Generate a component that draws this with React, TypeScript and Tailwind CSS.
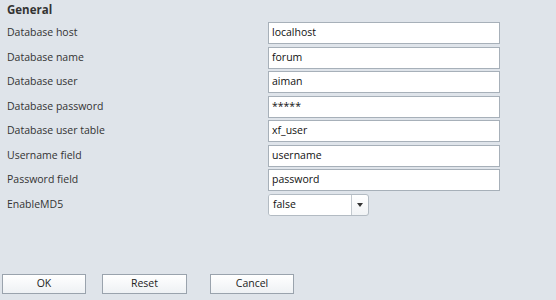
import React from "react";

const fields: { label: string; value: string }[] = [
    { label: "Database host", value: "localhost" },
    { label: "Database name", value: "forum" },
    { label: "Database user", value: "aiman" },
    { label: "Database password", value: "*****" },
    { label: "Database user table", value: "xf_user" },
    { label: "Username field", value: "username" },
    { label: "Password field", value: "password" },
];

const btn =
    "h-[20px] w-[84px] border border-[#9aa3ad] bg-gradient-to-b from-white to-[#eef1f4] text-[10.5px] text-[#222] flex items-center justify-center";

export default function App() {
    return (
        <div
            className="w-[556px] h-[300px] bg-[#dfe4ea] flex flex-col text-[#333] overflow-hidden"
            style={{ fontFamily: '"Open Sans", "Noto Sans", sans-serif' }}
        >
            <div className="pl-[7px] pt-[2px] h-[22px] text-[11.5px] font-bold text-[#333] leading-[16px]">General</div>

            <div className="flex flex-col gap-[2.5px]">
                {fields.map(f => (
                    <div key={f.label} className="flex items-center h-[22px]">
                        <span className="w-[268px] pl-[7px] text-[10.5px]">{f.label}</span>
                        <div className="w-[232px] h-[22px] bg-white border border-[#a7b0b9] pl-[3px] flex items-center text-[10.5px] text-[#111]">
                            {f.value}
                        </div>
                    </div>
                ))}

                <div className="flex items-center h-[22px]">
                    <span className="w-[268px] pl-[7px] text-[10.5px]">EnableMD5</span>
                    <div className="w-[101px] h-[22px] flex rounded-[3px] border border-[#b3bbc3] bg-gradient-to-b from-white to-[#f1f3f5] overflow-hidden">
                        <div className="flex-1 pl-[4px] flex items-center text-[10.5px] text-[#111] bg-white">false</div>
                        <div className="w-[17px] border-l border-[#c3c9cf] flex items-center justify-center">
                            <svg width="6" height="4" viewBox="0 0 6 4">
                                <path d="M0 0 L6 0 L3 4 Z" fill="#333" />
                            </svg>
                        </div>
                    </div>
                </div>
            </div>

            <div className="mt-auto mb-[6px] flex pl-[2px]">
                <div className={btn}>OK</div>
                <div className={`${btn} ml-[16px] w-[85px]`}>Reset</div>
                <div className={`${btn} ml-[23px]`}>Cancel</div>
            </div>
        </div>
    );
}
